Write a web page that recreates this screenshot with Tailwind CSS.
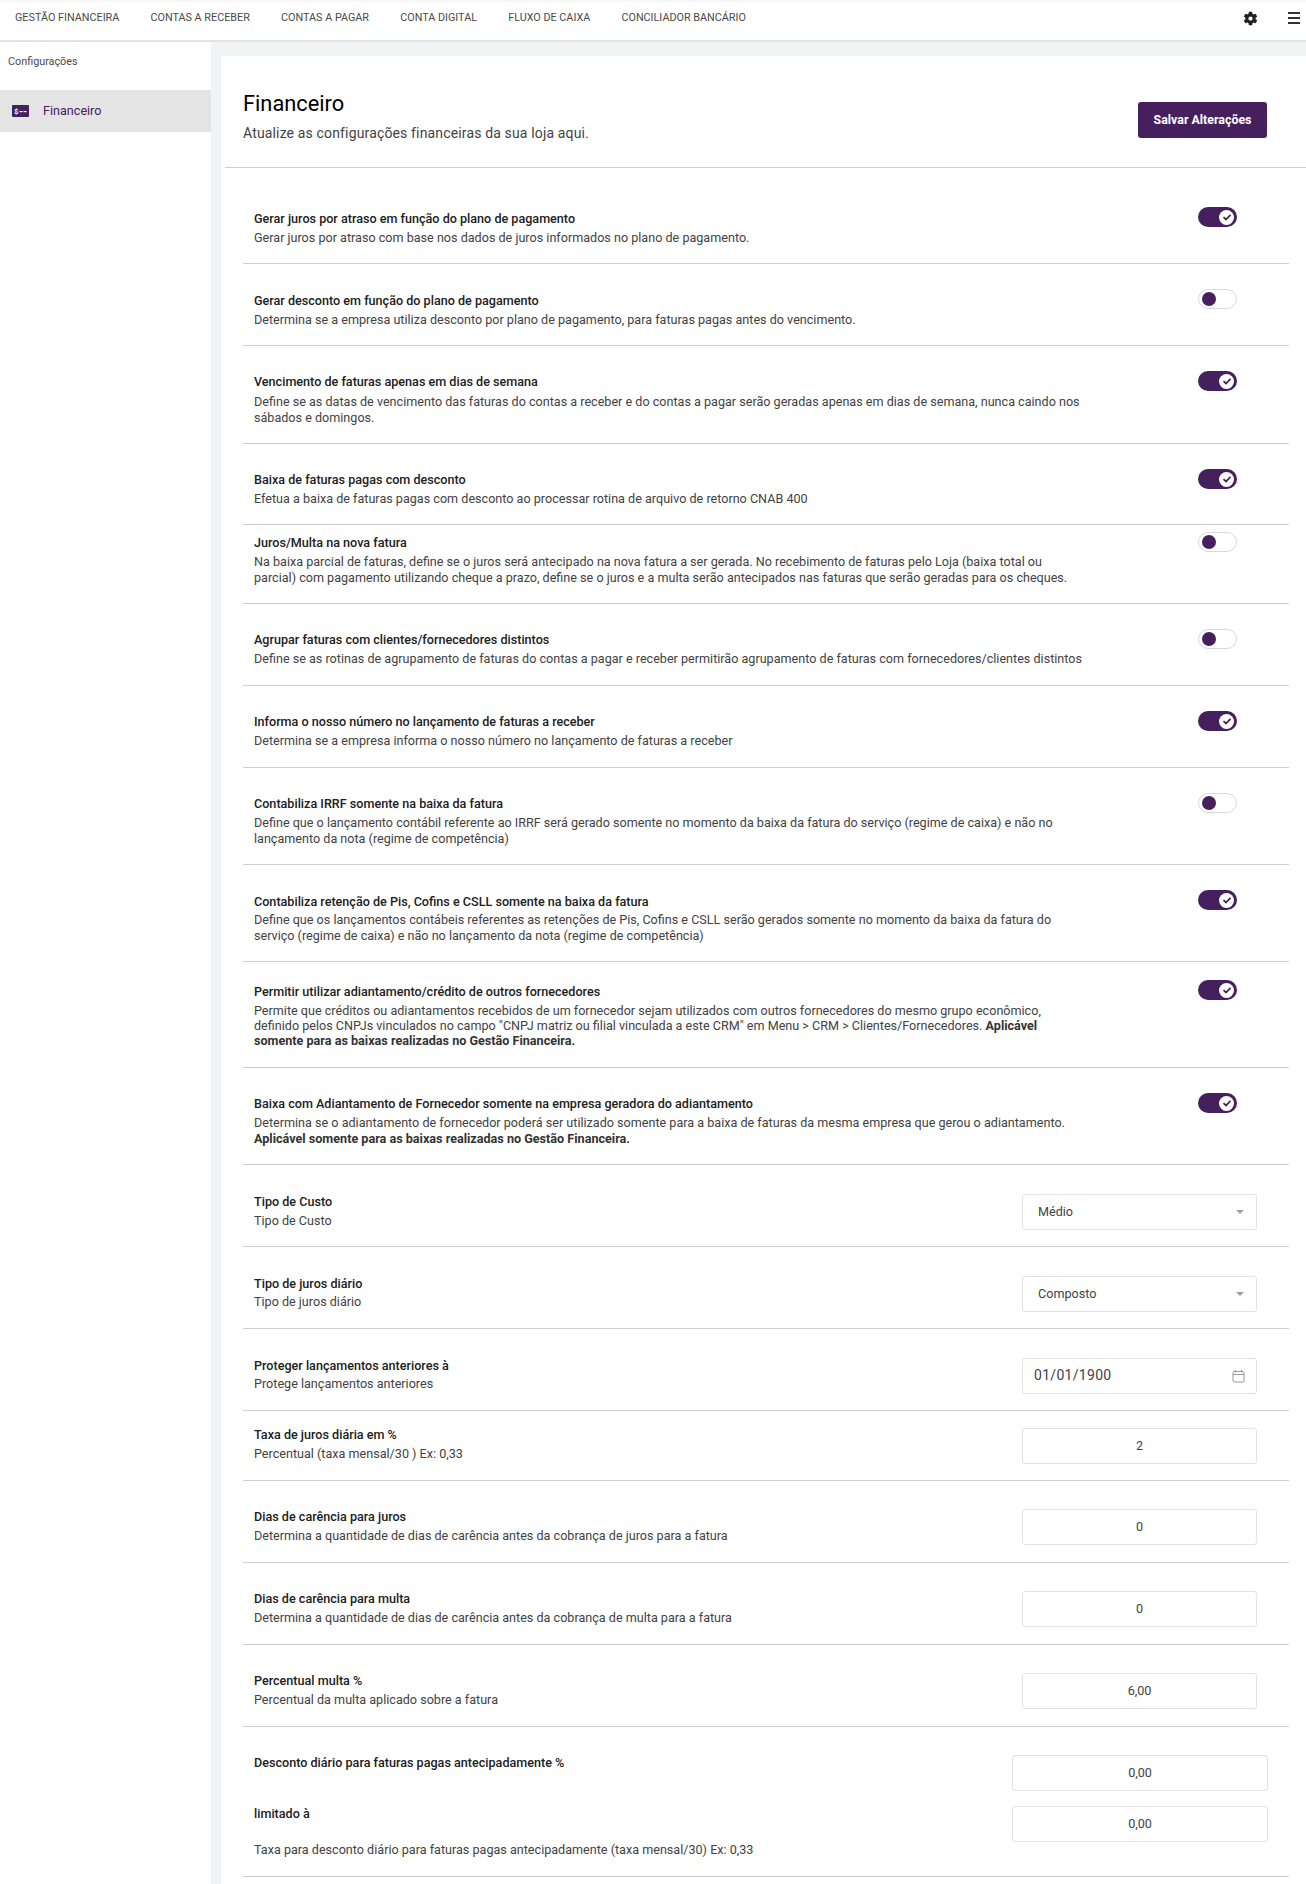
<!DOCTYPE html>
<html lang="pt-BR">
<head>
<meta charset="utf-8">
<title>Financeiro</title>
<script src="https://cdn.jsdelivr.net/npm/@tailwindcss/browser@4"></script>
</head>
<body class="m-0 bg-[#f2f3f7] font-['Roboto',sans-serif] text-[12.6px] leading-[15.6px] text-[#424242]">
<div class="w-[1306px] h-[1884px] overflow-hidden flex flex-col">
  <header class="h-[42px] shrink-0 bg-white border-t-2 border-t-[#f8f8f8] border-b-2 border-b-[#e2e2e2] flex items-center pb-[6px] pl-[15px] pr-[6px] text-[10.8px] text-[#4a4a4a] uppercase">
    <nav class="flex gap-[31.2px]">
      <a>Gestão Financeira</a><a>Contas a Receber</a><a>Contas a Pagar</a><a>Conta Digital</a><a>Fluxo de Caixa</a><a>Conciliador Bancário</a>
    </nav>
    <div class="ml-auto flex items-center gap-[29px]">
      <svg class="w-[17px] h-[17px]" viewBox="0 0 24 24" fill="#212121"><path d="M19.14 12.94c.04-.3.06-.61.06-.94 0-.32-.02-.64-.07-.94l2.03-1.58a.49.49 0 0 0 .12-.61l-1.92-3.32a.49.49 0 0 0-.59-.22l-2.39.96c-.5-.38-1.03-.7-1.62-.94l-.36-2.54a.48.48 0 0 0-.48-.41h-3.84a.48.48 0 0 0-.47.41l-.36 2.54c-.59.24-1.13.57-1.62.94l-2.39-.96a.49.49 0 0 0-.59.22L2.74 8.87a.48.48 0 0 0 .12.61l2.03 1.58c-.05.3-.09.63-.09.94s.02.64.07.94l-2.03 1.58a.49.49 0 0 0-.12.61l1.92 3.32c.12.22.37.29.59.22l2.39-.96c.5.38 1.03.7 1.62.94l.36 2.54c.05.24.24.41.48.41h3.84c.24 0 .44-.17.47-.41l.36-2.54c.59-.24 1.13-.56 1.62-.94l2.39.96c.22.08.47 0 .59-.22l1.92-3.32a.48.48 0 0 0-.12-.61l-2.01-1.58zM12 15a3 3 0 1 1 0-6 3 3 0 0 1 0 6z"/></svg>
      <div class="w-[12px] flex flex-col gap-[3px]">
        <span class="block h-[2px] bg-[#333]"></span><span class="block h-[2px] bg-[#333]"></span><span class="block h-[2px] bg-[#333]"></span>
      </div>
    </div>
  </header>
  <div class="flex flex-1 min-h-0">
    <aside class="w-[211px] shrink-0 bg-white">
      <p class="pl-[8px] pt-[12px] h-[48px] text-[10.8px] text-[#4a4a4a]">Configurações</p>
      <a class="flex items-center h-[42px] bg-[#e4e4e4] pl-[12px] gap-[14px] text-[12.6px] text-[#45205c]">
        <svg class="w-[17px] h-[12px]" viewBox="0 0 17 12"><rect width="17" height="12" rx="1" fill="#45205c"/><text x="2.2" y="8.8" font-size="7" font-weight="700" fill="#fff" font-family="Roboto">$</text><rect x="7.5" y="6" width="3" height="1.2" fill="#fff"/><rect x="11.5" y="6" width="3" height="1.2" fill="#fff"/></svg>
        Financeiro
      </a>
    </aside>
    <main class="ml-[10px] mt-[14px] flex-1 bg-white min-w-0">
      <div class="ml-[4px] h-[112px] border-b border-[#cfcfcf] flex justify-between pl-[18px] pr-[39px]">
        <div class="pt-[35px]">
          <h1 class="text-[21.8px] leading-[26px] font-normal text-black">Financeiro</h1>
          <p class="text-[14px] leading-[18px] mt-[7px] tracking-[0.15px] text-[#424242]">Atualize as configurações financeiras da sua loja aqui.</p>
        </div>
        <button class="mt-[46px] w-[129px] h-[36px] rounded-[3px] bg-[#45205c] text-white text-[12.4px] font-bold">Salvar Alterações</button>
      </div>
      <div class="ml-[22px] mr-[17px]">
        <section class="h-[96px] pt-[42px] border-b border-[#cfcfcf] pl-[11px] flex justify-between">
          <div class="w-[829px]"><h3 class="leading-[17px] font-medium text-[#212121]">Gerar juros por atraso em função do plano de pagamento</h3><p class="mt-[3px]">Gerar juros por atraso com base nos dados de juros informados no plano de pagamento.</p></div>
          <div class="mr-[52px] -mt-[3px] w-[39px] h-[20px] rounded-full bg-[#45205c] flex items-center justify-end pr-[3px]"><span class="w-[15px] h-[15px] rounded-full bg-white flex items-center justify-center"><svg class="w-[10px] h-[10px]" viewBox="0 0 10 10" fill="none" stroke="#45205c" stroke-width="1.7"><path d="M1.5 5.2 4 7.5 8.5 2.8"/></svg></span></div>
        </section>
        <section class="h-[82px] pt-[28px] border-b border-[#cfcfcf] pl-[11px] flex justify-between">
          <div class="w-[829px]"><h3 class="leading-[17px] font-medium text-[#212121]">Gerar desconto em função do plano de pagamento</h3><p class="mt-[3px]">Determina se a empresa utiliza desconto por plano de pagamento, para faturas pagas antes do vencimento.</p></div>
          <div class="mr-[52px] -mt-[3px] w-[39px] h-[20px] rounded-full bg-white border border-[#d5d8e0] flex items-center pl-[3px]"><span class="w-[14px] h-[14px] rounded-full bg-[#45205c]"></span></div>
        </section>
        <section class="h-[98px] pt-[27px] border-b border-[#cfcfcf] pl-[11px] flex justify-between">
          <div class="w-[829px]"><h3 class="leading-[17px] font-medium text-[#212121]">Vencimento de faturas apenas em dias de semana</h3><p class="mt-[4px]">Define se as datas de vencimento das faturas do contas a receber e do contas a pagar serão geradas apenas em dias de semana, nunca caindo nos sábados e domingos.</p></div>
          <div class="mr-[52px] -mt-[2px] w-[39px] h-[20px] rounded-full bg-[#45205c] flex items-center justify-end pr-[3px]"><span class="w-[15px] h-[15px] rounded-full bg-white flex items-center justify-center"><svg class="w-[10px] h-[10px]" viewBox="0 0 10 10" fill="none" stroke="#45205c" stroke-width="1.7"><path d="M1.5 5.2 4 7.5 8.5 2.8"/></svg></span></div>
        </section>
        <section class="h-[81px] pt-[27px] border-b border-[#cfcfcf] pl-[11px] flex justify-between">
          <div class="w-[829px]"><h3 class="leading-[17px] font-medium text-[#212121]">Baixa de faturas pagas com desconto</h3><p class="mt-[3px]">Efetua a baixa de faturas pagas com desconto ao processar rotina de arquivo de retorno CNAB 400</p></div>
          <div class="mr-[52px] -mt-[2px] w-[39px] h-[20px] rounded-full bg-[#45205c] flex items-center justify-end pr-[3px]"><span class="w-[15px] h-[15px] rounded-full bg-white flex items-center justify-center"><svg class="w-[10px] h-[10px]" viewBox="0 0 10 10" fill="none" stroke="#45205c" stroke-width="1.7"><path d="M1.5 5.2 4 7.5 8.5 2.8"/></svg></span></div>
        </section>
        <section class="h-[79px] pt-[9px] border-b border-[#cfcfcf] pl-[11px] flex justify-between">
          <div class="w-[829px]"><h3 class="leading-[17px] font-medium text-[#212121]">Juros/Multa na nova fatura</h3><p class="mt-[3px]">Na baixa parcial de faturas, define se o juros será antecipado na nova fatura a ser gerada. No recebimento de faturas pelo Loja (baixa total ou parcial) com pagamento utilizando cheque a prazo, define se o juros e a multa serão antecipados nas faturas que serão geradas para os cheques.</p></div>
          <div class="mr-[52px] -mt-[2px] w-[39px] h-[20px] rounded-full bg-white border border-[#d5d8e0] flex items-center pl-[3px]"><span class="w-[14px] h-[14px] rounded-full bg-[#45205c]"></span></div>
        </section>
        <section class="h-[82px] pt-[27px] border-b border-[#cfcfcf] pl-[11px] flex justify-between">
          <div class="w-[829px]"><h3 class="leading-[17px] font-medium text-[#212121]">Agrupar faturas com clientes/fornecedores distintos</h3><p class="mt-[3px]">Define se as rotinas de agrupamento de faturas do contas a pagar e receber permitirão agrupamento de faturas com fornecedores/clientes distintos</p></div>
          <div class="mr-[52px] -mt-[2px] w-[39px] h-[20px] rounded-full bg-white border border-[#d5d8e0] flex items-center pl-[3px]"><span class="w-[14px] h-[14px] rounded-full bg-[#45205c]"></span></div>
        </section>
        <section class="h-[82px] pt-[27px] border-b border-[#cfcfcf] pl-[11px] flex justify-between">
          <div class="w-[829px]"><h3 class="leading-[17px] font-medium text-[#212121]">Informa o nosso número no lançamento de faturas a receber</h3><p class="mt-[3px]">Determina se a empresa informa o nosso número no lançamento de faturas a receber</p></div>
          <div class="mr-[52px] -mt-[2px] w-[39px] h-[20px] rounded-full bg-[#45205c] flex items-center justify-end pr-[3px]"><span class="w-[15px] h-[15px] rounded-full bg-white flex items-center justify-center"><svg class="w-[10px] h-[10px]" viewBox="0 0 10 10" fill="none" stroke="#45205c" stroke-width="1.7"><path d="M1.5 5.2 4 7.5 8.5 2.8"/></svg></span></div>
        </section>
        <section class="h-[97px] pt-[27px] border-b border-[#cfcfcf] pl-[11px] flex justify-between">
          <div class="w-[829px]"><h3 class="leading-[17px] font-medium text-[#212121]">Contabiliza IRRF somente na baixa da fatura</h3><p class="mt-[3px]">Define que o lançamento contábil referente ao IRRF será gerado somente no momento da baixa da fatura do serviço (regime de caixa) e não no lançamento da nota (regime de competência)</p></div>
          <div class="mr-[52px] -mt-[2px] w-[39px] h-[20px] rounded-full bg-white border border-[#d5d8e0] flex items-center pl-[3px]"><span class="w-[14px] h-[14px] rounded-full bg-[#45205c]"></span></div>
        </section>
        <section class="h-[97px] pt-[28px] border-b border-[#cfcfcf] pl-[11px] flex justify-between">
          <div class="w-[829px]"><h3 class="leading-[17px] font-medium text-[#212121]">Contabiliza retenção de Pis, Cofins e CSLL somente na baixa da fatura</h3><p class="mt-[2px]">Define que os lançamentos contábeis referentes as retenções de Pis, Cofins e CSLL serão gerados somente no momento da baixa da fatura do serviço (regime de caixa) e não no lançamento da nota (regime de competência)</p></div>
          <div class="mr-[52px] -mt-[3px] w-[39px] h-[20px] rounded-full bg-[#45205c] flex items-center justify-end pr-[3px]"><span class="w-[15px] h-[15px] rounded-full bg-white flex items-center justify-center"><svg class="w-[10px] h-[10px]" viewBox="0 0 10 10" fill="none" stroke="#45205c" stroke-width="1.7"><path d="M1.5 5.2 4 7.5 8.5 2.8"/></svg></span></div>
        </section>
        <section class="h-[106px] pt-[21px] border-b border-[#cfcfcf] pl-[11px] flex justify-between">
          <div class="w-[829px]"><h3 class="leading-[17px] font-medium text-[#212121]">Permitir utilizar adiantamento/crédito de outros fornecedores</h3><p class="mt-[3px] leading-[15px]">Permite que créditos ou adiantamentos recebidos de um fornecedor sejam utilizados com outros fornecedores do mesmo grupo econômico, definido pelos CNPJs vinculados no campo "CNPJ matriz ou filial vinculada a este CRM" em Menu &gt; CRM &gt; Clientes/Fornecedores. <b class="font-bold text-[#333]">Aplicável somente para as baixas realizadas no Gestão Financeira.</b></p></div>
          <div class="mr-[52px] -mt-[3px] w-[39px] h-[20px] rounded-full bg-[#45205c] flex items-center justify-end pr-[3px]"><span class="w-[15px] h-[15px] rounded-full bg-white flex items-center justify-center"><svg class="w-[10px] h-[10px]" viewBox="0 0 10 10" fill="none" stroke="#45205c" stroke-width="1.7"><path d="M1.5 5.2 4 7.5 8.5 2.8"/></svg></span></div>
        </section>
        <section class="h-[97px] pt-[27px] border-b border-[#cfcfcf] pl-[11px] flex justify-between">
          <div class="w-[829px]"><h3 class="leading-[17px] font-medium text-[#212121]">Baixa com Adiantamento de Fornecedor somente na empresa geradora do adiantamento</h3><p class="mt-[3px]">Determina se o adiantamento de fornecedor poderá ser utilizado somente para a baixa de faturas da mesma empresa que gerou o adiantamento. <b class="font-bold text-[#333]">Aplicável somente para as baixas realizadas no Gestão Financeira.</b></p></div>
          <div class="mr-[52px] -mt-[2px] w-[39px] h-[20px] rounded-full bg-[#45205c] flex items-center justify-end pr-[3px]"><span class="w-[15px] h-[15px] rounded-full bg-white flex items-center justify-center"><svg class="w-[10px] h-[10px]" viewBox="0 0 10 10" fill="none" stroke="#45205c" stroke-width="1.7"><path d="M1.5 5.2 4 7.5 8.5 2.8"/></svg></span></div>
        </section>
        <section class="h-[82px] pt-[28px] border-b border-[#cfcfcf] pl-[11px] flex justify-between">
          <div><h3 class="leading-[17px] font-medium text-[#212121]">Tipo de Custo</h3><p class="mt-[3px]">Tipo de Custo</p></div>
          <div class="mr-[32px] mt-[1px] w-[235px] h-[36px] rounded-[3px] border border-[#e2e2e2] bg-white flex items-center justify-between pl-[15px] pr-[12px] pb-[1px] text-[#424242]">Médio<span class="w-0 h-0 border-x-[4px] border-x-transparent border-t-[4px] border-t-[#9e9e9e]"></span></div>
        </section>
        <section class="h-[82px] pt-[28px] border-b border-[#cfcfcf] pl-[11px] flex justify-between">
          <div><h3 class="leading-[17px] font-medium text-[#212121]">Tipo de juros diário</h3><p class="mt-[2px]">Tipo de juros diário</p></div>
          <div class="mr-[32px] mt-[1px] w-[235px] h-[36px] rounded-[3px] border border-[#e2e2e2] bg-white flex items-center justify-between pl-[15px] pr-[12px] pb-[1px] text-[#424242]">Composto<span class="w-0 h-0 border-x-[4px] border-x-transparent border-t-[4px] border-t-[#9e9e9e]"></span></div>
        </section>
        <section class="h-[82px] pt-[28px] border-b border-[#cfcfcf] pl-[11px] flex justify-between">
          <div><h3 class="leading-[17px] font-medium text-[#212121]">Proteger lançamentos anteriores à</h3><p class="mt-[2px]">Protege lançamentos anteriores</p></div>
          <div class="mr-[32px] mt-[1px] w-[235px] h-[36px] rounded-[3px] border border-[#e2e2e2] bg-white flex items-center justify-between pl-[11px] pr-[11px] pb-[1px] text-[14px] tracking-[0.3px] text-[#424242]">01/01/1900
            <svg class="w-[13px] h-[14px]" viewBox="0 0 13 14" fill="none" stroke="#9a9a9a"><rect x="1" y="2.5" width="11" height="10.5" rx="1"/><path d="M1 5.5h11M3.5 1v2.5M9.5 1v2.5"/></svg>
          </div>
        </section>
        <section class="h-[70px] pt-[15px] border-b border-[#cfcfcf] pl-[11px] flex justify-between">
          <div><h3 class="leading-[17px] font-medium text-[#212121]">Taxa de juros diária em %</h3><p class="mt-[3px]">Percentual (taxa mensal/30 ) Ex: 0,33</p></div>
          <div class="mr-[32px] mt-[2px] w-[235px] h-[36px] rounded-[3px] border border-[#e2e2e2] bg-white flex items-center justify-center text-[#424242]">2</div>
        </section>
        <section class="h-[82px] pt-[27px] border-b border-[#cfcfcf] pl-[11px] flex justify-between">
          <div><h3 class="leading-[17px] font-medium text-[#212121]">Dias de carência para juros</h3><p class="mt-[3px]">Determina a quantidade de dias de carência antes da cobrança de juros para a fatura</p></div>
          <div class="mr-[32px] mt-[1px] w-[235px] h-[36px] rounded-[3px] border border-[#e2e2e2] bg-white flex items-center justify-center text-[#424242]">0</div>
        </section>
        <section class="h-[82px] pt-[27px] border-b border-[#cfcfcf] pl-[11px] flex justify-between">
          <div><h3 class="leading-[17px] font-medium text-[#212121]">Dias de carência para multa</h3><p class="mt-[3px]">Determina a quantidade de dias de carência antes da cobrança de multa para a fatura</p></div>
          <div class="mr-[32px] mt-[1px] w-[235px] h-[36px] rounded-[3px] border border-[#e2e2e2] bg-white flex items-center justify-center text-[#424242]">0</div>
        </section>
        <section class="h-[82px] pt-[27px] border-b border-[#cfcfcf] pl-[11px] flex justify-between">
          <div><h3 class="leading-[17px] font-medium text-[#212121]">Percentual multa %</h3><p class="mt-[3px]">Percentual da multa aplicado sobre a fatura</p></div>
          <div class="mr-[32px] mt-[1px] w-[235px] h-[36px] rounded-[3px] border border-[#e2e2e2] bg-white flex items-center justify-center text-[#424242]">6,00</div>
        </section>
        <section class="h-[150px] pt-[27px] border-b border-[#cfcfcf] pl-[11px] flex justify-between">
          <div>
            <h3 class="leading-[17px] font-medium text-[#212121]">Desconto diário para faturas pagas antecipadamente %</h3>
            <h3 class="mt-[34px] leading-[17px] font-medium text-[#212121]">limitado à</h3>
            <p class="mt-[20px]">Taxa para desconto diário para faturas pagas antecipadamente (taxa mensal/30) Ex: 0,33</p>
          </div>
          <div class="mr-[21px] mt-[1px] w-[256px] flex flex-col gap-[15px]">
            <div class="h-[36px] rounded-[3px] border border-[#e2e2e2] bg-white flex items-center justify-center text-[#424242]">0,00</div>
            <div class="h-[36px] rounded-[3px] border border-[#e2e2e2] bg-white flex items-center justify-center text-[#424242]">0,00</div>
          </div>
        </section>
      </div>
    </main>
  </div>
</div>
</body>
</html>
